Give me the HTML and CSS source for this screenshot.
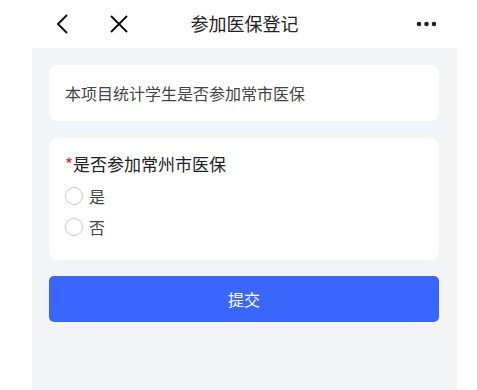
FILE: index.html
```html
<!DOCTYPE html>
<html lang="zh">
<head>
<meta charset="utf-8">
<link rel="stylesheet" href="styles.css">
</head>
<body>
<header class="nav">
  <div class="nav-left">
    <svg class="ico back" width="14" height="22" viewBox="0 0 14 22"><path d="M12 2 L3 11 L12 20" fill="none" stroke="#111" stroke-width="2"/></svg>
    <svg class="ico close" width="20" height="20" viewBox="0 0 20 20"><path d="M2 2 L18 18 M18 2 L2 18" fill="none" stroke="#111" stroke-width="2"/></svg>
  </div>
  <div class="nav-title">参加医保登记</div>
  <div class="nav-right">
    <svg width="21" height="6" viewBox="0 0 21 6"><circle cx="3" cy="3" r="2.3" fill="#222"/><circle cx="10.5" cy="3" r="2.3" fill="#222"/><circle cx="18" cy="3" r="2.3" fill="#222"/></svg>
  </div>
</header>
<main class="page">
  <section class="card intro">本项目统计学生是否参加常市医保</section>
  <section class="card question">
    <div class="q-title"><span class="req">*</span>是否参加常州市医保</div>
    <label class="opt"><span class="radio"></span>是</label>
    <label class="opt"><span class="radio"></span>否</label>
  </section>
  <button class="submit">提交</button>
</main>
</body>
</html>
```
FILE: styles.css
```css
html, body {
  margin: 0;
  padding: 0;
  background: #fff;
  font-family: "Noto Sans CJK SC", "Noto Sans", sans-serif;
  color: #333;
}
.nav {
  height: 48px;
  display: flex;
  align-items: center;
  position: relative;
}
.nav-left {
  display: flex;
  align-items: center;
  padding-left: 55px;
  gap: 40px;
}
.nav-title {
  position: absolute;
  left: 0;
  right: 0;
  text-align: center;
  font-size: 18px;
  color: #222;
  font-weight: 400;
  top: 10px;
  line-height: 26px;
  padding-left: 12px;
  pointer-events: none;
}
.nav-right {
  margin-left: auto;
  padding-right: 40px;
  display: flex;
}
.page {
  margin: 0 20px 0 32px;
  background: #f3f4f6;
  height: 342px;
  padding: 17px 18px 0 17px;
  box-sizing: border-box;
  display: flex;
  flex-direction: column;
}
.card {
  background: #fff;
  border-radius: 9px;
}
.intro {
  height: 56px;
  display: flex;
  align-items: center;
  padding-left: 16px;
  font-size: 16px;
  color: #444;
}
.question {
  margin-top: 17px;
  height: 122px;
  padding: 14px 16px 0 16px;
  box-sizing: border-box;
}
.q-title {
  font-size: 17px;
  line-height: 24px;
  color: #222;
}
.req {
  color: #e02020;
  font-size: 17px;
  margin-right: 0;
}
.opt {
  display: flex;
  align-items: center;
  font-size: 16px;
  color: #444;
  height: 31px;
}
.opt:first-of-type {
  margin-top: 4px;
}
.radio {
  width: 16px;
  height: 16px;
  border: 1px solid #c8c8c8;
  border-radius: 50%;
  margin-right: 6px;
  box-sizing: content-box;
}
.submit {
  margin-top: 16px;
  height: 46px;
  border: none;
  border-radius: 5px;
  background: #3a66fd;
  color: #fff;
  font-family: inherit;
  font-size: 16px;
}
```
